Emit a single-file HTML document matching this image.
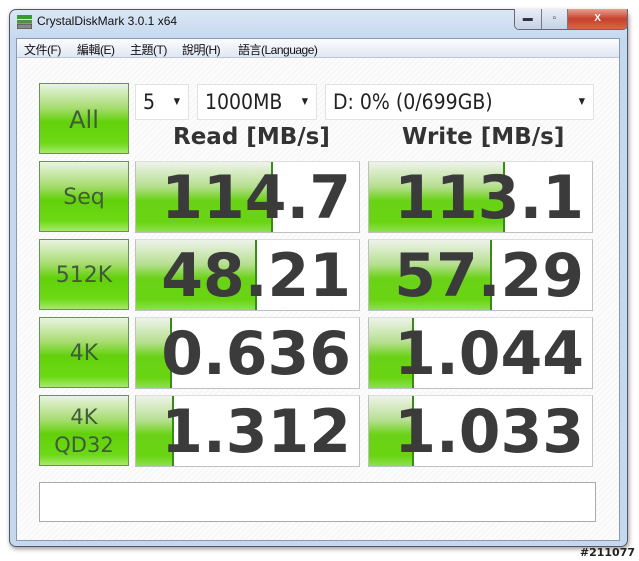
<!DOCTYPE html>
<html><head><meta charset="utf-8"><style>
*{margin:0;padding:0;box-sizing:border-box}
body{width:639px;height:561px;background:#fff;position:relative;overflow:hidden;font-family:"Liberation Sans","Noto Sans CJK TC",sans-serif}
.win{position:absolute;left:9px;top:9px;width:619px;height:538px;border:1px solid #556;border-radius:7px;background:linear-gradient(#dbe7f5,#c4d8ee 30px,#c5d8ee);box-shadow:1px 2px 5px rgba(0,0,0,.4)}
.title{position:absolute;left:37px;top:14px;font-size:12px;color:#111}
.icon{position:absolute;left:17px;top:15px;width:15px;height:14px}
.btns{position:absolute;left:514px;top:9px;width:114px;height:21px;border:1px solid #667;border-top:none;border-radius:0 0 5px 5px;overflow:hidden;display:flex}
.btns div{height:100%;background:linear-gradient(#e8eef6,#c4d2e4);border-right:1px solid #778;font-size:10px;text-align:center;line-height:19px;color:#334}
.btns .x{background:linear-gradient(#e8a090,#c7412c 50%,#d8664a);color:#fff;font-weight:bold;border:none}
.client{position:absolute;left:16px;top:38px;width:604px;height:503px;border:1px solid #8a9ab0;background:repeating-linear-gradient(135deg,#fcfcfc 0 3px,#f4f4f4 3px 4px)}
.menu{position:absolute;left:17px;top:39px;width:602px;height:19px;background:linear-gradient(#fbfcfe,#dfe7f2);border-bottom:1px solid #b9c6d8;font-size:12px;color:#111}
.menu span{position:absolute;top:2px;white-space:nowrap;letter-spacing:-0.5px}
.gb{position:absolute;left:39px;width:90px;border:1px solid #6f8f5a;background:linear-gradient(#e9f3e1 0%,#a6dc6e 35%,#62d10a 55%,#6bd915 85%,#a8e86c 100%);color:#3f5b3a;text-align:center;font-family:"DejaVu Sans",sans-serif}
.dd{position:absolute;top:84px;height:36px;background:#fff;border:1px solid #e2e2e2;font-size:21px;font-family:"DejaVu Sans Condensed","DejaVu Sans",sans-serif;color:#222;line-height:34px;padding-left:7px}
.dd i{position:absolute;right:8px;top:0;font-style:normal;font-size:9px}
.hd{position:absolute;top:124px;font-family:"DejaVu Sans",sans-serif;font-weight:bold;font-size:23px;color:#333}
.box{position:absolute;width:225px;height:72px;background:#fff;border:1px solid #c0c0c0;border-top-color:#ddd;overflow:hidden}
.bar{position:absolute;left:0;top:0;bottom:0;background:linear-gradient(#eef3ea 0%,#b6df90 35%,#6ad217 55%,#69d412 85%,#8ee04c 100%);border-right:2px solid #3a8a1a}
.num{position:absolute;right:8px;top:-2px;font-family:"DejaVu Sans",sans-serif;font-weight:bold;font-size:60px;color:#3b3b3b;letter-spacing:0px;line-height:76px}
</style></head><body>
<div class="win"></div>
<svg class="icon" viewBox="0 0 15 14"><rect x="0" y="0" width="15" height="4" fill="#3a9a2a"/><rect x="0" y="5" width="15" height="3" fill="#5a8a4a"/><rect x="0" y="9" width="15" height="5" fill="#888" stroke="#444"/></svg>
<div class="title">CrystalDiskMark 3.0.1 x64</div>
<div class="btns"><div style="width:27px">▬</div><div style="width:27px">▫</div><div class="x" style="width:60px">X</div></div>
<div class="client"></div>
<div class="menu"><span style="left:7px">文件(F)</span><span style="left:60px">編輯(E)</span><span style="left:113px">主題(T)</span><span style="left:165px">說明(H)</span><span style="left:221px">語言(Language)</span></div>
<div class="gb" style="top:83px;height:71px;font-size:24px;line-height:72px">All</div>
<div class="dd" style="left:135px;width:54px">5<i>▼</i></div>
<div class="dd" style="left:197px;width:120px">1000MB<i>▼</i></div>
<div class="dd" style="left:325px;width:269px">D: 0% (0/699GB)<i>▼</i></div>
<div class="hd" style="left:173px">Read [MB/s]</div>
<div class="hd" style="left:402px">Write [MB/s]</div>

<div class="gb" style="top:161px;height:71px;font-size:22px;line-height:72px">Seq</div>
<div class="gb" style="top:239px;height:71px;font-size:22px;line-height:72px">512K</div>
<div class="gb" style="top:317px;height:71px;font-size:22px;line-height:72px">4K</div>
<div class="gb" style="top:395px;height:71px;font-size:21px;line-height:28px;padding-top:7px">4K<br>QD32</div>

<div class="box" style="left:135px;top:161px"><div class="bar" style="width:137px"></div><div class="num">114.7</div></div>
<div class="box" style="left:368px;top:161px"><div class="bar" style="width:136px"></div><div class="num">113.1</div></div>
<div class="box" style="left:135px;top:239px"><div class="bar" style="width:121px"></div><div class="num">48.21</div></div>
<div class="box" style="left:368px;top:239px"><div class="bar" style="width:123px"></div><div class="num">57.29</div></div>
<div class="box" style="left:135px;top:317px"><div class="bar" style="width:36px"></div><div class="num">0.636</div></div>
<div class="box" style="left:368px;top:317px"><div class="bar" style="width:45px"></div><div class="num">1.044</div></div>
<div class="box" style="left:135px;top:395px"><div class="bar" style="width:38px"></div><div class="num">1.312</div></div>
<div class="box" style="left:368px;top:395px"><div class="bar" style="width:45px"></div><div class="num">1.033</div></div>

<div style="position:absolute;left:39px;top:482px;width:557px;height:40px;background:#fff;border:1px solid #aaa"></div>
<div style="position:absolute;right:4px;top:546px;font-size:11px;font-weight:bold;color:#222;font-family:'DejaVu Sans',sans-serif">#211077</div>
</body></html>
